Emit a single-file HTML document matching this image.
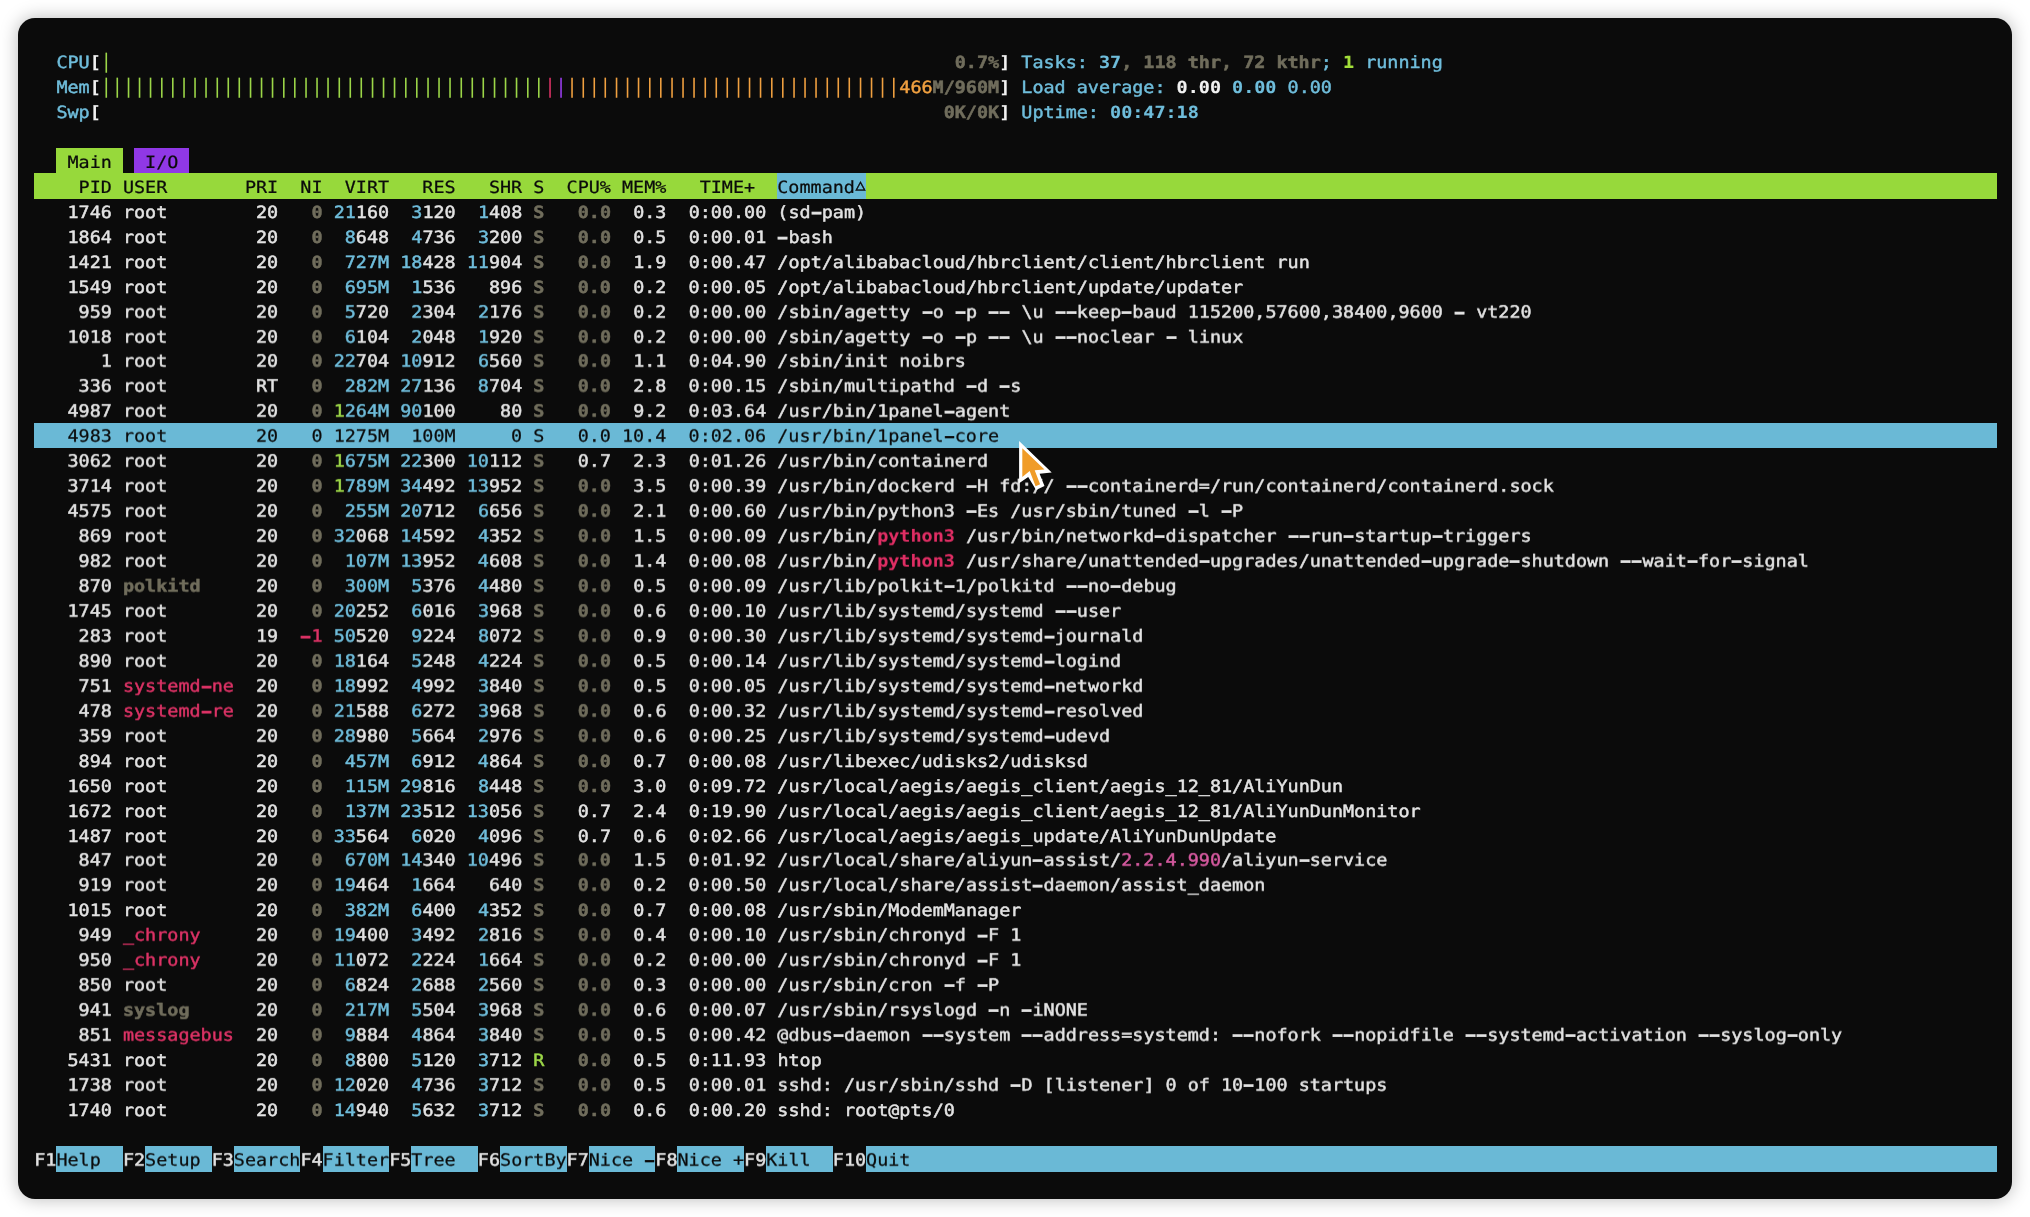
<!DOCTYPE html>
<html lang="en"><head><meta charset="utf-8"><title>htop</title>
<style>
html,body{margin:0;padding:0}
body{width:2030px;height:1217px;background:#fff;position:relative;overflow:hidden}
#win{position:absolute;left:18px;top:18px;width:1994px;height:1181px;background:#0b0b0b;border-radius:17px;box-shadow:0 0 18px rgba(0,0,0,.28)}
.r{position:absolute;height:24.95px;line-height:24.95px;white-space:pre;font-family:"DejaVu Sans Mono","Liberation Mono",monospace;font-size:18.434px;color:#e3e3e3;font-kerning:none;font-variant-ligatures:none;text-rendering:geometricPrecision;letter-spacing:0;-webkit-text-stroke:0.5px;transform:scaleY(0.915);transform-origin:0 50%}
.r .k{-webkit-text-stroke:0.25px}
.r .W,.r .C,.r .G,.r .R{-webkit-text-stroke:0.15px}
.r .g{-webkit-text-stroke:0.55px}
.b{position:absolute;display:block;height:25.7px}
.bgG{background:#97d93b}.bgC{background:#6ab9d6}.bgP{background:#9038e6}
.w{color:#e3e3e3}.W{color:#f2f2f2;font-weight:bold}
.c{color:#6fbddb}.C{color:#6fbddb;font-weight:bold}
.g{color:#706d5c;font-weight:bold}
.G{color:#a3de3a;font-weight:bold}.gn{color:#9cd648}
.r_{color:#dd3366}
.R{color:#df2e64;font-weight:bold}
.o{color:#f0a040}.p{color:#9a3df0}.m{color:#d65aa0}
.k{color:#0b0b0b}
.r .tri{font-size:16.5px;position:relative;top:-3px;left:0.5px;-webkit-text-stroke:0.5px}
.r .h{display:inline-block;font-weight:inherit;transform:scale(1.9,1.5)}
.r .bar{display:inline-block;transform:scaleY(1.19);-webkit-text-stroke:0}
#t{position:absolute;left:0;top:0;width:2030px;height:1217px;will-change:transform}
#cur{position:absolute;left:1010px;top:432px;width:50px;height:66px}
</style></head>
<body>
<div id="win"></div>
<div id="t">
<i class="b bgG" style="left:56.38px;top:148.15px;width:66.54px"></i>
<i class="b bgP" style="left:134.01px;top:148.15px;width:55.45px"></i>
<i class="b bgG" style="left:34.20px;top:173.10px;width:1962.93px"></i>
<i class="b bgC" style="left:777.23px;top:173.10px;width:88.72px"></i>
<i class="b bgC" style="left:34.20px;top:422.60px;width:1962.93px"></i>
<i class="b bgC" style="left:56.38px;top:1146.15px;width:66.54px"></i>
<i class="b bgC" style="left:145.10px;top:1146.15px;width:66.54px"></i>
<i class="b bgC" style="left:233.82px;top:1146.15px;width:66.54px"></i>
<i class="b bgC" style="left:322.54px;top:1146.15px;width:66.54px"></i>
<i class="b bgC" style="left:411.26px;top:1146.15px;width:66.54px"></i>
<i class="b bgC" style="left:499.98px;top:1146.15px;width:66.54px"></i>
<i class="b bgC" style="left:588.70px;top:1146.15px;width:66.54px"></i>
<i class="b bgC" style="left:677.42px;top:1146.15px;width:66.54px"></i>
<i class="b bgC" style="left:766.14px;top:1146.15px;width:66.54px"></i>
<i class="b bgC" style="left:865.95px;top:1146.15px;width:1131.18px"></i>
<div class="r" style="left:56.38px;top:51.05px"><span class="c">CPU</span><span class="W">[</span><span class="gn bar">|                                                                            </span><span class="g">0.7%</span><span class="W">] </span><span class="c">Tasks: </span><span class="C">37</span><span class="g">, 118 thr, 72 kthr</span><span class="c">;</span><span class="G"> 1</span><span class="c"> running</span></div>
<div class="r" style="left:56.38px;top:76.00px"><span class="c">Mem</span><span class="W">[</span><span class="gn bar">||||||||||||||||||||||||||||||||||||||||</span><span class="r_ bar">|</span><span class="p bar">|</span><span class="o bar">||||||||||||||||||||||||||||||</span><span class="o">466</span><span class="g">M/960M</span><span class="W">] </span><span class="c">Load average: </span><span class="W">0.00</span><span class="c"> </span><span class="C">0.00</span><span class="c"> 0.00</span></div>
<div class="r" style="left:56.38px;top:100.95px"><span class="c">Swp</span><span class="W">[                                                                            </span><span class="g">0K/0K</span><span class="W">] </span><span class="c">Uptime: </span><span class="C">00:47:18</span></div>
<div class="r" style="left:56.38px;top:150.85px"><span class="k"> Main   I/O </span></div>
<div class="r" style="left:34.20px;top:175.80px"><span class="k">    PID USER       PRI  NI  VIRT   RES   SHR S  CPU% MEM%   TIME+  Command</span><span class="k tri">△</span></div>
<div class="r" style="left:67.47px;top:200.75px"><span class="w">1746 root        20   </span><span class="g">0 </span><span class="c">21</span><span class="w">160  </span><span class="c">3</span><span class="w">120  </span><span class="c">1</span><span class="w">408 </span><span class="g">S   0.0  </span><span class="w">0.3  0:00.00 (sd<b class="h">-</b>pam)</span></div>
<div class="r" style="left:67.47px;top:225.70px"><span class="w">1864 root        20   </span><span class="g">0  </span><span class="c">8</span><span class="w">648  </span><span class="c">4</span><span class="w">736  </span><span class="c">3</span><span class="w">200 </span><span class="g">S   0.0  </span><span class="w">0.5  0:00.01 <b class="h">-</b>bash</span></div>
<div class="r" style="left:67.47px;top:250.65px"><span class="w">1421 root        20   </span><span class="g">0  </span><span class="c">727M 18</span><span class="w">428 </span><span class="c">11</span><span class="w">904 </span><span class="g">S   0.0  </span><span class="w">1.9  0:00.47 /opt/alibabacloud/hbrclient/client/hbrclient run</span></div>
<div class="r" style="left:67.47px;top:275.60px"><span class="w">1549 root        20   </span><span class="g">0  </span><span class="c">695M  1</span><span class="w">536   896 </span><span class="g">S   0.0  </span><span class="w">0.2  0:00.05 /opt/alibabacloud/hbrclient/update/updater</span></div>
<div class="r" style="left:78.56px;top:300.55px"><span class="w">959 root        20   </span><span class="g">0  </span><span class="c">5</span><span class="w">720  </span><span class="c">2</span><span class="w">304  </span><span class="c">2</span><span class="w">176 </span><span class="g">S   0.0  </span><span class="w">0.2  0:00.00 /sbin/agetty <b class="h">-</b>o <b class="h">-</b>p <b class="h">-</b><b class="h">-</b> \u <b class="h">-</b><b class="h">-</b>keep<b class="h">-</b>baud 115200,57600,38400,9600 <b class="h">-</b> vt220</span></div>
<div class="r" style="left:67.47px;top:325.50px"><span class="w">1018 root        20   </span><span class="g">0  </span><span class="c">6</span><span class="w">104  </span><span class="c">2</span><span class="w">048  </span><span class="c">1</span><span class="w">920 </span><span class="g">S   0.0  </span><span class="w">0.2  0:00.00 /sbin/agetty <b class="h">-</b>o <b class="h">-</b>p <b class="h">-</b><b class="h">-</b> \u <b class="h">-</b><b class="h">-</b>noclear <b class="h">-</b> linux</span></div>
<div class="r" style="left:100.74px;top:350.45px"><span class="w">1 root        20   </span><span class="g">0 </span><span class="c">22</span><span class="w">704 </span><span class="c">10</span><span class="w">912  </span><span class="c">6</span><span class="w">560 </span><span class="g">S   0.0  </span><span class="w">1.1  0:04.90 /sbin/init noibrs</span></div>
<div class="r" style="left:78.56px;top:375.40px"><span class="w">336 root        RT   </span><span class="g">0  </span><span class="c">282M 27</span><span class="w">136  </span><span class="c">8</span><span class="w">704 </span><span class="g">S   0.0  </span><span class="w">2.8  0:00.15 /sbin/multipathd <b class="h">-</b>d <b class="h">-</b>s</span></div>
<div class="r" style="left:67.47px;top:400.35px"><span class="w">4987 root        20   </span><span class="g">0 </span><span class="gn">1</span><span class="c">264M 90</span><span class="w">100    80 </span><span class="g">S   0.0  </span><span class="w">9.2  0:03.64 /usr/bin/1panel<b class="h">-</b>agent</span></div>
<div class="r" style="left:34.20px;top:425.30px"><span class="k">   4983 root        20   0 1275M  100M     0 S   0.0 10.4  0:02.06 /usr/bin/1panel<b class="h">-</b>core</span></div>
<div class="r" style="left:67.47px;top:450.25px"><span class="w">3062 root        20   </span><span class="g">0 </span><span class="gn">1</span><span class="c">675M 22</span><span class="w">300 </span><span class="c">10</span><span class="w">112 </span><span class="g">S   </span><span class="w">0.7  2.3  0:01.26 /usr/bin/containerd</span></div>
<div class="r" style="left:67.47px;top:475.20px"><span class="w">3714 root        20   </span><span class="g">0 </span><span class="gn">1</span><span class="c">789M 34</span><span class="w">492 </span><span class="c">13</span><span class="w">952 </span><span class="g">S   0.0  </span><span class="w">3.5  0:00.39 /usr/bin/dockerd <b class="h">-</b>H fd:// <b class="h">-</b><b class="h">-</b>containerd=/run/containerd/containerd.sock</span></div>
<div class="r" style="left:67.47px;top:500.15px"><span class="w">4575 root        20   </span><span class="g">0  </span><span class="c">255M 20</span><span class="w">712  </span><span class="c">6</span><span class="w">656 </span><span class="g">S   0.0  </span><span class="w">2.1  0:00.60 /usr/bin/python3 <b class="h">-</b>Es /usr/sbin/tuned <b class="h">-</b>l <b class="h">-</b>P</span></div>
<div class="r" style="left:78.56px;top:525.10px"><span class="w">869 root        20   </span><span class="g">0 </span><span class="c">32</span><span class="w">068 </span><span class="c">14</span><span class="w">592  </span><span class="c">4</span><span class="w">352 </span><span class="g">S   0.0  </span><span class="w">1.5  0:00.09 /usr/bin/</span><span class="R">python3</span><span class="w"> /usr/bin/networkd<b class="h">-</b>dispatcher <b class="h">-</b><b class="h">-</b>run<b class="h">-</b>startup<b class="h">-</b>triggers</span></div>
<div class="r" style="left:78.56px;top:550.05px"><span class="w">982 root        20   </span><span class="g">0  </span><span class="c">107M 13</span><span class="w">952  </span><span class="c">4</span><span class="w">608 </span><span class="g">S   0.0  </span><span class="w">1.4  0:00.08 /usr/bin/</span><span class="R">python3</span><span class="w"> /usr/share/unattended<b class="h">-</b>upgrades/unattended<b class="h">-</b>upgrade<b class="h">-</b>shutdown <b class="h">-</b><b class="h">-</b>wait<b class="h">-</b>for<b class="h">-</b>signal</span></div>
<div class="r" style="left:78.56px;top:575.00px"><span class="w">870 </span><span class="g">polkitd     </span><span class="w">20   </span><span class="g">0  </span><span class="c">300M  5</span><span class="w">376  </span><span class="c">4</span><span class="w">480 </span><span class="g">S   0.0  </span><span class="w">0.5  0:00.09 /usr/lib/polkit<b class="h">-</b>1/polkitd <b class="h">-</b><b class="h">-</b>no<b class="h">-</b>debug</span></div>
<div class="r" style="left:67.47px;top:599.95px"><span class="w">1745 root        20   </span><span class="g">0 </span><span class="c">20</span><span class="w">252  </span><span class="c">6</span><span class="w">016  </span><span class="c">3</span><span class="w">968 </span><span class="g">S   0.0  </span><span class="w">0.6  0:00.10 /usr/lib/systemd/systemd <b class="h">-</b><b class="h">-</b>user</span></div>
<div class="r" style="left:78.56px;top:624.90px"><span class="w">283 root        19  </span><span class="r_"><b class="h">-</b>1 </span><span class="c">50</span><span class="w">520  </span><span class="c">9</span><span class="w">224  </span><span class="c">8</span><span class="w">072 </span><span class="g">S   0.0  </span><span class="w">0.9  0:00.30 /usr/lib/systemd/systemd<b class="h">-</b>journald</span></div>
<div class="r" style="left:78.56px;top:649.85px"><span class="w">890 root        20   </span><span class="g">0 </span><span class="c">18</span><span class="w">164  </span><span class="c">5</span><span class="w">248  </span><span class="c">4</span><span class="w">224 </span><span class="g">S   0.0  </span><span class="w">0.5  0:00.14 /usr/lib/systemd/systemd<b class="h">-</b>logind</span></div>
<div class="r" style="left:78.56px;top:674.80px"><span class="w">751 </span><span class="r_">systemd<b class="h">-</b>ne  </span><span class="w">20   </span><span class="g">0 </span><span class="c">18</span><span class="w">992  </span><span class="c">4</span><span class="w">992  </span><span class="c">3</span><span class="w">840 </span><span class="g">S   0.0  </span><span class="w">0.5  0:00.05 /usr/lib/systemd/systemd<b class="h">-</b>networkd</span></div>
<div class="r" style="left:78.56px;top:699.75px"><span class="w">478 </span><span class="r_">systemd<b class="h">-</b>re  </span><span class="w">20   </span><span class="g">0 </span><span class="c">21</span><span class="w">588  </span><span class="c">6</span><span class="w">272  </span><span class="c">3</span><span class="w">968 </span><span class="g">S   0.0  </span><span class="w">0.6  0:00.32 /usr/lib/systemd/systemd<b class="h">-</b>resolved</span></div>
<div class="r" style="left:78.56px;top:724.70px"><span class="w">359 root        20   </span><span class="g">0 </span><span class="c">28</span><span class="w">980  </span><span class="c">5</span><span class="w">664  </span><span class="c">2</span><span class="w">976 </span><span class="g">S   0.0  </span><span class="w">0.6  0:00.25 /usr/lib/systemd/systemd<b class="h">-</b>udevd</span></div>
<div class="r" style="left:78.56px;top:749.65px"><span class="w">894 root        20   </span><span class="g">0  </span><span class="c">457M  6</span><span class="w">912  </span><span class="c">4</span><span class="w">864 </span><span class="g">S   0.0  </span><span class="w">0.7  0:00.08 /usr/libexec/udisks2/udisksd</span></div>
<div class="r" style="left:67.47px;top:774.60px"><span class="w">1650 root        20   </span><span class="g">0  </span><span class="c">115M 29</span><span class="w">816  </span><span class="c">8</span><span class="w">448 </span><span class="g">S   0.0  </span><span class="w">3.0  0:09.72 /usr/local/aegis/aegis_client/aegis_12_81/AliYunDun</span></div>
<div class="r" style="left:67.47px;top:799.55px"><span class="w">1672 root        20   </span><span class="g">0  </span><span class="c">137M 23</span><span class="w">512 </span><span class="c">13</span><span class="w">056 </span><span class="g">S   </span><span class="w">0.7  2.4  0:19.90 /usr/local/aegis/aegis_client/aegis_12_81/AliYunDunMonitor</span></div>
<div class="r" style="left:67.47px;top:824.50px"><span class="w">1487 root        20   </span><span class="g">0 </span><span class="c">33</span><span class="w">564  </span><span class="c">6</span><span class="w">020  </span><span class="c">4</span><span class="w">096 </span><span class="g">S   </span><span class="w">0.7  0.6  0:02.66 /usr/local/aegis/aegis_update/AliYunDunUpdate</span></div>
<div class="r" style="left:78.56px;top:849.45px"><span class="w">847 root        20   </span><span class="g">0  </span><span class="c">670M 14</span><span class="w">340 </span><span class="c">10</span><span class="w">496 </span><span class="g">S   0.0  </span><span class="w">1.5  0:01.92 /usr/local/share/aliyun<b class="h">-</b>assist/</span><span class="m">2.2.4.990</span><span class="w">/aliyun<b class="h">-</b>service</span></div>
<div class="r" style="left:78.56px;top:874.40px"><span class="w">919 root        20   </span><span class="g">0 </span><span class="c">19</span><span class="w">464  </span><span class="c">1</span><span class="w">664   640 </span><span class="g">S   0.0  </span><span class="w">0.2  0:00.50 /usr/local/share/assist<b class="h">-</b>daemon/assist_daemon</span></div>
<div class="r" style="left:67.47px;top:899.35px"><span class="w">1015 root        20   </span><span class="g">0  </span><span class="c">382M  6</span><span class="w">400  </span><span class="c">4</span><span class="w">352 </span><span class="g">S   0.0  </span><span class="w">0.7  0:00.08 /usr/sbin/ModemManager</span></div>
<div class="r" style="left:78.56px;top:924.30px"><span class="w">949 </span><span class="r_">_chrony     </span><span class="w">20   </span><span class="g">0 </span><span class="c">19</span><span class="w">400  </span><span class="c">3</span><span class="w">492  </span><span class="c">2</span><span class="w">816 </span><span class="g">S   0.0  </span><span class="w">0.4  0:00.10 /usr/sbin/chronyd <b class="h">-</b>F 1</span></div>
<div class="r" style="left:78.56px;top:949.25px"><span class="w">950 </span><span class="r_">_chrony     </span><span class="w">20   </span><span class="g">0 </span><span class="c">11</span><span class="w">072  </span><span class="c">2</span><span class="w">224  </span><span class="c">1</span><span class="w">664 </span><span class="g">S   0.0  </span><span class="w">0.2  0:00.00 /usr/sbin/chronyd <b class="h">-</b>F 1</span></div>
<div class="r" style="left:78.56px;top:974.20px"><span class="w">850 root        20   </span><span class="g">0  </span><span class="c">6</span><span class="w">824  </span><span class="c">2</span><span class="w">688  </span><span class="c">2</span><span class="w">560 </span><span class="g">S   0.0  </span><span class="w">0.3  0:00.00 /usr/sbin/cron <b class="h">-</b>f <b class="h">-</b>P</span></div>
<div class="r" style="left:78.56px;top:999.15px"><span class="w">941 </span><span class="g">syslog      </span><span class="w">20   </span><span class="g">0  </span><span class="c">217M  5</span><span class="w">504  </span><span class="c">3</span><span class="w">968 </span><span class="g">S   0.0  </span><span class="w">0.6  0:00.07 /usr/sbin/rsyslogd <b class="h">-</b>n <b class="h">-</b>iNONE</span></div>
<div class="r" style="left:78.56px;top:1024.10px"><span class="w">851 </span><span class="r_">messagebus  </span><span class="w">20   </span><span class="g">0  </span><span class="c">9</span><span class="w">884  </span><span class="c">4</span><span class="w">864  </span><span class="c">3</span><span class="w">840 </span><span class="g">S   0.0  </span><span class="w">0.5  0:00.42 @dbus<b class="h">-</b>daemon <b class="h">-</b><b class="h">-</b>system <b class="h">-</b><b class="h">-</b>address=systemd: <b class="h">-</b><b class="h">-</b>nofork <b class="h">-</b><b class="h">-</b>nopidfile <b class="h">-</b><b class="h">-</b>systemd<b class="h">-</b>activation <b class="h">-</b><b class="h">-</b>syslog<b class="h">-</b>only</span></div>
<div class="r" style="left:67.47px;top:1049.05px"><span class="w">5431 root        20   </span><span class="g">0  </span><span class="c">8</span><span class="w">800  </span><span class="c">5</span><span class="w">120  </span><span class="c">3</span><span class="w">712 </span><span class="gn">R   </span><span class="g">0.0  </span><span class="w">0.5  0:11.93 htop</span></div>
<div class="r" style="left:67.47px;top:1074.00px"><span class="w">1738 root        20   </span><span class="g">0 </span><span class="c">12</span><span class="w">020  </span><span class="c">4</span><span class="w">736  </span><span class="c">3</span><span class="w">712 </span><span class="g">S   0.0  </span><span class="w">0.5  0:00.01 sshd: /usr/sbin/sshd <b class="h">-</b>D [listener] 0 of 10<b class="h">-</b>100 startups</span></div>
<div class="r" style="left:67.47px;top:1098.95px"><span class="w">1740 root        20   </span><span class="g">0 </span><span class="c">14</span><span class="w">940  </span><span class="c">5</span><span class="w">632  </span><span class="c">3</span><span class="w">712 </span><span class="g">S   0.0  </span><span class="w">0.6  0:00.20 sshd: root@pts/0</span></div>
<div class="r" style="left:34.20px;top:1148.85px"><span class="w">F1</span><span class="k">Help  </span><span class="w">F2</span><span class="k">Setup </span><span class="w">F3</span><span class="k">Search</span><span class="w">F4</span><span class="k">Filter</span><span class="w">F5</span><span class="k">Tree  </span><span class="w">F6</span><span class="k">SortBy</span><span class="w">F7</span><span class="k">Nice <b class="h">-</b></span><span class="w">F8</span><span class="k">Nice +</span><span class="w">F9</span><span class="k">Kill  </span><span class="w">F10</span><span class="k">Quit</span></div>
</div>
<svg id="cur" viewBox="1010 432 50 66"><polygon points="1019.1,440.9 1019.1,483.3 1028.2,476.9 1036.1,490.0 1044.5,486.0 1039.6,473.7 1051.7,472.5" fill="#ffffff"/><polygon points="1022.3,448.3 1022.3,476.9 1029.7,471.0 1035.6,486.3 1040.1,484.3 1034.7,470.3 1044.5,469.5" fill="#f09c28"/></svg>
</body></html>
